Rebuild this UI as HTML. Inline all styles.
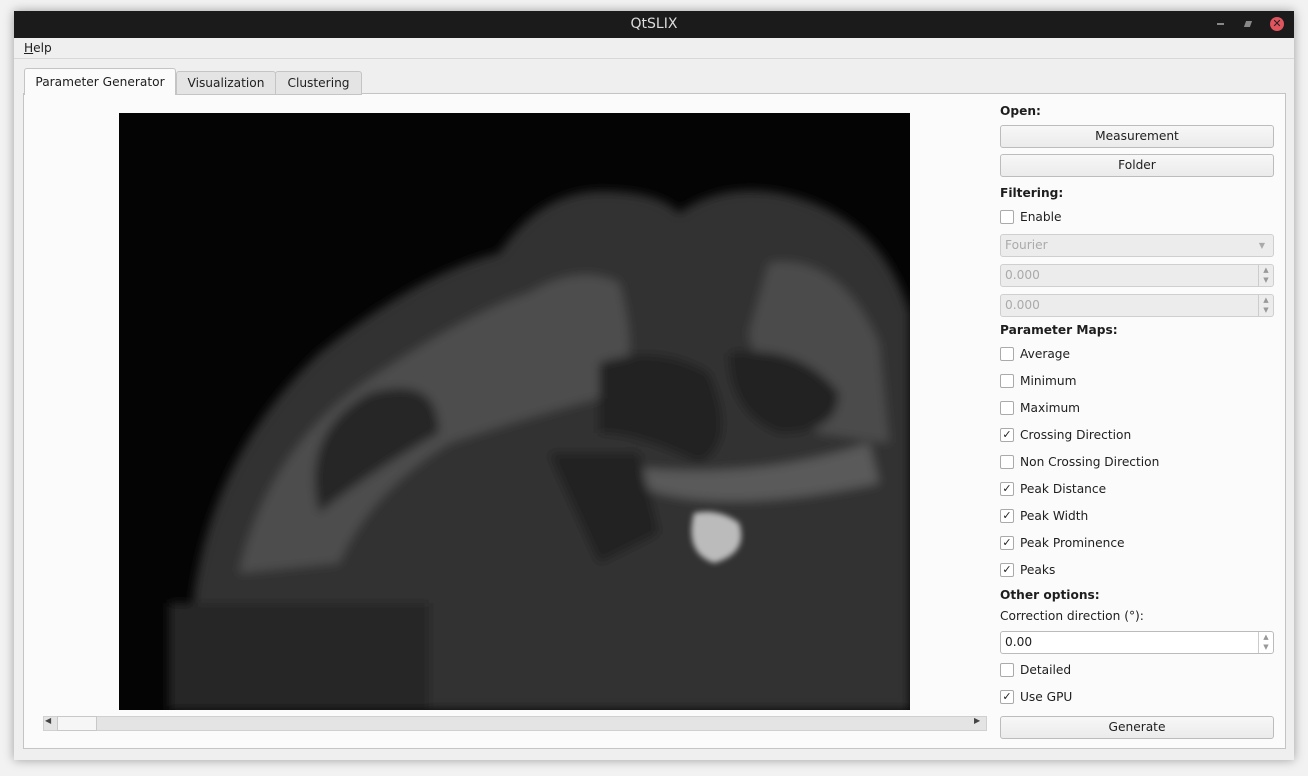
<!DOCTYPE html>
<html><head><style>
body{margin:0;width:1308px;height:776px;background:#f2f2f2;position:relative;overflow:hidden;font-family:"DejaVu Sans","Liberation Sans",sans-serif;font-size:12.2px;color:#1e1e1e}
.a{position:absolute}
.win{left:14px;top:11px;width:1280px;height:749px;background:#efefef;box-shadow:0 0 10px rgba(0,0,0,.35)}
.tb{left:14px;top:11px;width:1280px;height:27px;background:#1b1b1b;color:#ddd;text-align:center;line-height:27px;font-size:14px}
.btn{position:absolute;left:1000px;width:272px;height:21px;border:1px solid #bcbcbc;border-radius:3px;background:linear-gradient(#f7f7f7,#ebebeb);text-align:center;line-height:21px}
.lbl{position:absolute;left:1000px;font-weight:bold}
.cb{position:absolute;left:1000px;display:flex;align-items:center;height:14px}
.cb i{display:block;width:12px;height:12px;border:1px solid #aaa;background:#fff;margin-right:6px;border-radius:2px;font-style:normal;font-size:11px;line-height:12px;text-align:center;font-weight:bold}
.dis{position:absolute;left:1000px;width:272px;height:21px;border:1px solid #cfcfcf;border-radius:3px;background:#ececec;color:#aaa;line-height:21px;text-indent:4px}
.sp{position:absolute;right:0;top:0;width:14px;height:21px;border-left:1px solid #ccc;font-size:7px;line-height:10px;text-align:center;color:#999;text-indent:0}
</style></head><body>
<div class="a win"></div>
<div class="a tb">QtSLIX</div>
<div class="a" style="left:1217px;top:23px;width:7px;height:2px;background:#888"></div>
<div class="a" style="left:1245px;top:21px;width:6px;height:6px;background:#888;transform:skewX(-20deg)"></div>
<div class="a" style="left:1270px;top:17px;width:14px;height:14px;border-radius:50%;background:#e0545e;color:#222;font-size:11px;line-height:14px;text-align:center;font-weight:bold">✕</div>
<div class="a" style="left:14px;top:38px;width:1280px;height:20px;border-bottom:1px solid #d8d8d8"></div>
<div class="a" style="left:24px;top:41px"><u>H</u>elp</div>
<div class="a" style="left:23px;top:93px;width:1261px;height:654px;border:1px solid #c4c4c4;background:#fbfbfb"></div>
<div class="a" style="left:24px;top:68px;width:150px;height:26px;border:1px solid #c4c4c4;border-bottom:none;background:#fbfbfb;border-radius:3px 3px 0 0;text-align:center;line-height:26px">Parameter Generator</div>
<div class="a" style="left:176px;top:71px;width:98px;height:22px;border:1px solid #c4c4c4;background:#e4e4e4;border-radius:3px 3px 0 0;text-align:center;line-height:22px">Visualization</div>
<div class="a" style="left:275px;top:71px;width:85px;height:22px;border:1px solid #c4c4c4;background:#e4e4e4;border-radius:3px 3px 0 0;text-align:center;line-height:22px">Clustering</div>
<svg class="a" style="left:119px;top:113px" width="791" height="597" viewBox="0 0 791 597">
<defs><filter id="b"><feGaussianBlur stdDeviation="5"/></filter><filter id="b2"><feGaussianBlur stdDeviation="3"/></filter></defs>
<rect width="791" height="597" fill="#040404"/>
<g filter="url(#b)">
<path d="M70 597 L75 480 Q95 340 200 240 Q300 160 380 140 Q420 80 480 78 Q540 78 560 100 Q600 70 660 80 Q760 100 791 200 L791 597 Z" fill="#333"/>
<path d="M120 460 Q150 330 260 260 Q350 200 410 180 Q460 150 500 170 Q520 240 500 280 Q420 300 330 330 Q250 380 220 450 Z" fill="#4e4e4e"/>
<path d="M650 150 Q720 140 760 230 L770 330 L700 320 Q640 280 630 220 Z" fill="#4c4c4c"/>
<path d="M480 250 Q540 230 590 260 Q620 330 580 350 Q520 320 480 320 Z" fill="#232323"/>
<path d="M610 240 Q680 230 720 280 Q720 320 660 320 Q610 300 610 240 Z" fill="#232323"/>
<path d="M250 280 Q320 260 320 320 Q250 360 200 400 Q180 320 250 280 Z" fill="#262626"/>
<path d="M430 340 Q600 380 750 330 L760 370 Q620 400 540 380 Z" fill="#5a5a5a"/>
<rect x="50" y="490" width="260" height="107" fill="#282828"/>
<path d="M430 340 L520 340 L540 420 L480 450 Z" fill="#202020"/>
</g>
<g filter="url(#b2)"><path d="M575 400 Q600 395 620 410 Q630 440 595 450 Q565 440 575 400 Z" fill="#bbb"/></g>
</svg>
<div class="a" style="left:43px;top:716px;width:942px;height:13px;background:#e4e4e4;border:1px solid #d0d0d0"></div>
<div class="a" style="left:57px;top:716px;width:38px;height:13px;background:#f6f6f6;border:1px solid #c8c8c8"></div>
<div class="a" style="left:45px;top:716px;font-size:8px;color:#444">◀</div>
<div class="a" style="left:974px;top:716px;font-size:8px;color:#444">▶</div>
<div class="lbl" style="top:104px">Open:</div>
<div class="btn" style="top:125px">Measurement</div>
<div class="btn" style="top:154px">Folder</div>
<div class="lbl" style="top:186px">Filtering:</div>
<div class="cb" style="top:210px"><i></i>Enable</div>
<div class="dis" style="top:234px">Fourier<span style="position:absolute;right:8px;font-size:8px">▼</span></div>
<div class="dis" style="top:264px">0.000<span class="sp">▲<br>▼</span></div>
<div class="dis" style="top:294px">0.000<span class="sp">▲<br>▼</span></div>
<div class="lbl" style="top:323px">Parameter Maps:</div>
<div class="cb" style="top:347px"><i></i>Average</div>
<div class="cb" style="top:374px"><i></i>Minimum</div>
<div class="cb" style="top:401px"><i></i>Maximum</div>
<div class="cb" style="top:428px"><i>✓</i>Crossing Direction</div>
<div class="cb" style="top:455px"><i></i>Non Crossing Direction</div>
<div class="cb" style="top:482px"><i>✓</i>Peak Distance</div>
<div class="cb" style="top:509px"><i>✓</i>Peak Width</div>
<div class="cb" style="top:536px"><i>✓</i>Peak Prominence</div>
<div class="cb" style="top:563px"><i>✓</i>Peaks</div>
<div class="lbl" style="top:588px">Other options:</div>
<div class="a" style="left:1000px;top:609px">Correction direction (°):</div>
<div class="dis" style="top:631px;background:#fff;color:#1e1e1e;border-color:#bbb">0.00<span class="sp">▲<br>▼</span></div>
<div class="cb" style="top:663px"><i></i>Detailed</div>
<div class="cb" style="top:690px"><i>✓</i>Use GPU</div>
<div class="btn" style="top:716px">Generate</div>
</body></html>
